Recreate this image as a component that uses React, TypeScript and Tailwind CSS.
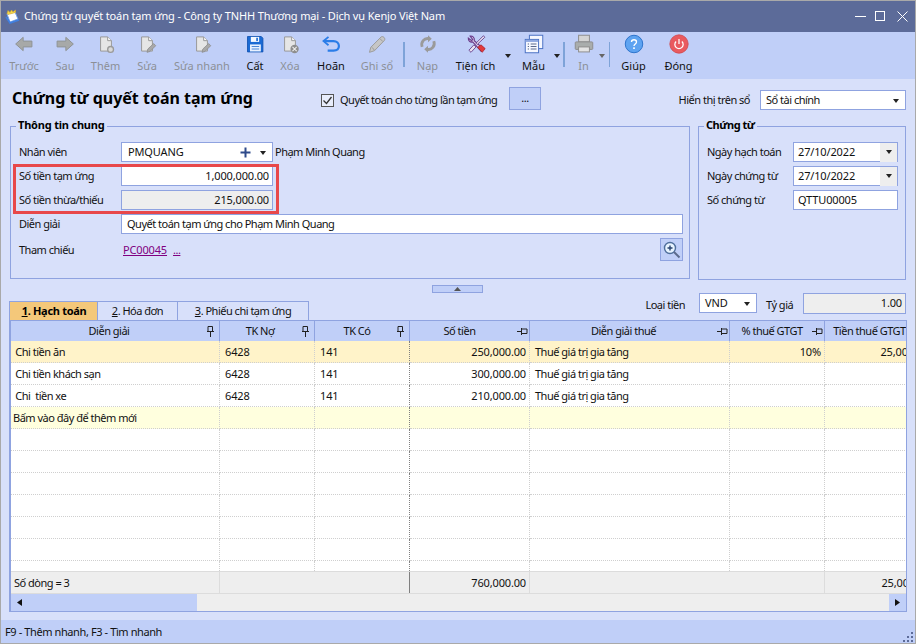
import React from "react";

const F = "font-['Noto_Sans','Liberation_Sans',sans-serif]";
const NUM = "tracking-[-0.15px]";

function DocBase({ children }: { children?: React.ReactNode }) {
  return (
    <svg width="20" height="20" viewBox="0 0 24 24" className="block">
      <path d="M5.5 3.5H14L18.5 8V20.5H5.5Z" fill="#e6e6e6" stroke="#9a9a9a" strokeWidth="1.2" />
      <path d="M14 3.5V8H18.5" fill="#fafafa" stroke="#9a9a9a" strokeWidth="1.2" />
      {children}
    </svg>
  );
}

const s = { width: 20, height: 20, viewBox: "0 0 24 24", className: "block" };

const Icons: Record<string, React.ReactNode> = {
  back: (
    <svg {...s}>
      <path d="M2 12L11 4V8.5H21.5V15.5H11V20Z" fill="#a7a9a8" stroke="#8f9496" strokeWidth="1.2" />
    </svg>
  ),
  next: (
    <svg {...s}>
      <path d="M22 12L13 4V8.5H2.5V15.5H13V20Z" fill="#a7a9a8" stroke="#8f9496" strokeWidth="1.2" />
    </svg>
  ),
  add: (
    <DocBase>
      <circle cx="17.5" cy="18.5" r="3.5" fill="#d9d9d9" stroke="#9a9a9a" strokeWidth="1.6" />
    </DocBase>
  ),
  edit: (
    <DocBase>
      <path d="M12 22L13 18L20 11.5L22.5 14L15.5 21Z" fill="#a9a9a9" stroke="#8a8a8a" strokeWidth=".9" />
    </DocBase>
  ),
  save: (
    <svg {...s}>
      <path d="M3 3H19.5L21.5 5V21.5H3Z" fill="#1a6ad4" stroke="#0f4fb0" />
      <rect x="7" y="3.5" width="10" height="6" fill="#f4f8ff" />
      <rect x="13.5" y="4.5" width="2" height="4" fill="#1a6ad4" />
      <rect x="6" y="12.5" width="13" height="8.5" fill="#e8f1ff" />
      <path d="M8 15H17M8 18H17" stroke="#4a86d8" strokeWidth="1.2" />
    </svg>
  ),
  del: (
    <DocBase>
      <circle cx="17.5" cy="18" r="5" fill="#8e8e8e" />
      <path d="M15 15.5L20 20.5M20 15.5L15 20.5" stroke="#eee" strokeWidth="1.3" />
    </DocBase>
  ),
  undo: (
    <svg {...s}>
      <path d="M9 3.5L3 8.5L9 13.5" fill="none" stroke="#2a7de8" strokeWidth="2.2" />
      <path d="M4.5 8.5H15C19 8.5 21.5 11 21.5 14.5C21.5 18 19 20 15 20H8" fill="none" stroke="#2a7de8" strokeWidth="2.6" />
    </svg>
  ),
  post: (
    <svg {...s}>
      <path d="M3 22L4.5 16L17 3.5C19 2 22.5 5 21 7.5L9 20Z" fill="#c6c6c6" stroke="#9c9c9c" strokeWidth="1.2" />
      <path d="M6 16L9 19.5M15.5 5.5L19 9" stroke="#9c9c9c" strokeWidth="1.2" />
    </svg>
  ),
  reload: (
    <svg {...s}>
      <path d="M5 15.5C3 9.5 7.5 4.5 13 5.5M19 8.5C21 14.5 16.5 19.5 11 18.5" fill="none" stroke="#9a9a9a" strokeWidth="3.4" />
      <path d="M12 1.5L16.5 5.7L12 10ZM12 14L7.5 18.3L12 22.5Z" fill="#9a9a9a" />
    </svg>
  ),
  tools: (
    <svg {...s}>
      <path d="M5 2.5L8 6.5L6.8 8L2.8 5C2.5 8 5 10.5 8 9.5L18 20.5L21 18L10 8C10.5 4.5 8 2 5 2.5Z" fill="#e0d4ee" stroke="#6a3d8c" strokeWidth="1.4" />
      <path d="M21 2L12 11L13.5 12.5L22.5 4ZM9.5 13L3.5 19.5L6 22L12 15.5Z" fill="#e8e0f0" stroke="#5f3583" strokeWidth="1" />
      <path d="M14 16L18 13L23 17.5L19.5 22Z" fill="#e23a3a" stroke="#a91f2a" strokeWidth=".9" />
    </svg>
  ),
  tmpl: (
    <svg {...s}>
      <rect x="6.5" y="1.5" width="16" height="16" fill="#f6f8ff" stroke="#4c73c4" strokeWidth="1.2" />
      <rect x="1.5" y="6.5" width="16" height="16" fill="#f6f8ff" stroke="#4c73c4" strokeWidth="1.2" />
      <rect x="2" y="7" width="15" height="2.5" fill="#8fa8e0" />
      <path d="M4.5 12H6M8 12H15M4.5 15H6M8 15H15M4.5 18H6M8 18H15" stroke="#5b6a8c" strokeWidth="1.2" />
    </svg>
  ),
  print: (
    <svg {...s}>
      <rect x="5.5" y="1.5" width="13" height="8" fill="#d4d4d4" stroke="#8e8e8e" strokeWidth="1.2" />
      <rect x="1.5" y="9.5" width="21" height="9" rx="1" fill="#a9adac" stroke="#8e8e8e" strokeWidth="1.2" />
      <rect x="5.5" y="15.5" width="13" height="6" fill="#e4e4e4" stroke="#8e8e8e" strokeWidth="1.2" />
    </svg>
  ),
  help: (
    <svg {...s}>
      <circle cx="12" cy="12" r="10.5" fill="#5ea3f1" stroke="#2e74cc" strokeWidth="1.2" />
      <path d="M9 9.5C9 6 15 6 15 9.5C15 12 12 12 12 14.5" fill="none" stroke="#fff" strokeWidth="1.6" />
      <rect x="11" y="16" width="2" height="2" fill="#fff" />
    </svg>
  ),
  close: (
    <svg {...s}>
      <circle cx="12" cy="12" r="11" fill="#e95a5f" stroke="#cf4b50" />
      <path d="M8.5 9A5 5 0 1 0 15.5 9M12 6V12" fill="none" stroke="#fff" strokeWidth="1.5" />
    </svg>
  ),
};

function Tool({ w, icon, label, on }: { w: string; icon: string; label: string; on?: boolean }) {
  return (
    <div className={`flex flex-col items-center shrink-0 ${w}`}>
      <div className="h-[24px] mt-[2px]">{Icons[icon]}</div>
      <div className={`leading-[16px] whitespace-nowrap ${on ? "text-[#111]" : "text-[#8c8f96]"}`}>{label}</div>
    </div>
  );
}

function Sep() {
  return <div className="w-[1.5px] h-[25px] bg-[#7ea3d8] mt-[10px] shrink-0" />;
}

function Drop({ color = "#222" }: { color?: string }) {
  return (
    <svg width="6" height="4" viewBox="0 0 6 4" className="shrink-0 block">
      <path d="M0 0H6L3 4Z" fill={color} />
    </svg>
  );
}

function Pin({ h }: { h?: boolean }) {
  return h ? (
    <svg width="11" height="9" viewBox="0 0 11 9" className="absolute right-[1px] top-[6px]">
      <path d="M0 4.5H4M4.5 1V8M4.5 2H10V6.5H4.5" fill="none" stroke="#222" />
    </svg>
  ) : (
    <svg width="9" height="11" viewBox="0 0 9 11" className="absolute right-[4px] top-[5px]">
      <path d="M1 5.5H8M2 0.5H6.5V5.5M2 0.5V5.5M4.5 6V11" fill="none" stroke="#222" />
    </svg>
  );
}

const inp = "h-[20px] border border-[#8fa3e0] flex items-center text-[#111] pt-[1px]";
const lbl = "pl-[8px] pt-[1px] whitespace-nowrap";
const cols = "grid grid-cols-[209px_95px_95px_120px_200px_95px_108px] w-[922px]";

function Cell({ i, right, children }: { i: number; right?: boolean; children?: React.ReactNode }) {
  const b = i === 2 ? "border-r border-r-[#808080]" : "border-r border-dotted border-r-[#cfcfcf]";
  const pad = right ? "justify-end pr-[3px]" : i === 0 ? "pl-[2px]" : "pl-[5px]";
  const t = right || i === 1 || i === 2 ? NUM : "";
  return (
    <div className={`h-[22px] pt-[1px] flex items-center border-b border-dotted border-b-[#cfcfcf] overflow-hidden whitespace-nowrap ${b} ${pad} ${t}`}>
      {children}
    </div>
  );
}

function Row({ v, bg }: { v: (string | undefined)[]; bg?: string }) {
  return (
    <div className={`${cols} ${bg ?? "bg-white"} shrink-0`}>
      {[0, 1, 2, 3, 4, 5, 6].map((i) => (
        <Cell key={i} i={i} right={i === 3 || i === 5 || i === 6}>
          {v[i]}
        </Cell>
      ))}
    </div>
  );
}

function Head({ pr, label, h, pin = true }: { pr: string; label: string; h?: boolean; pin?: boolean }) {
  return (
    <div className={`relative h-[20px] pt-[1px] flex items-center justify-center border-r border-[#8fa3e0] whitespace-nowrap ${pr}`}>
      {label}
      {pin && <Pin h={h} />}
    </div>
  );
}

export default function App() {
  return (
    <div className={`${F} w-[916px] h-[644px] flex flex-col border border-[#a9a9a9] bg-[#d8e0fa] text-[11px] tracking-[-0.5px] text-[#111] overflow-hidden`}>
      {/* title bar */}
      <div className="h-[31px] shrink-0 bg-[#5c6b99] flex items-center text-white">
        <svg width="16" height="15" viewBox="0 0 16 15" className="ml-[3px] mr-[4px]">
          <path d="M3 5L11 3L14 10L6 13Z" fill="#fdfdfd" stroke="#6fa0ee" />
          <path d="M3 4.5L4 1.5L6 3.5L7.5 1L9 3L11.5 1L11.5 3.5L4 5.5Z" fill="#f6d94a" stroke="#d8a828" strokeWidth=".6" />
          <path d="M2 8L6 14L15 11" fill="none" stroke="#3f7fe0" strokeWidth="1.5" />
        </svg>
        <span className="tracking-[-0.15px]">Chứng từ quyết toán tạm ứng - Công ty TNHH Thương mại - Dịch vụ Kenjo Việt Nam</span>
        <svg width="56" height="14" viewBox="0 0 56 14" className="ml-auto mr-[4px] mb-[2px]">
          <path d="M0 7.5H11" stroke="#fff" />
          <rect x="20.5" y="2.5" width="9" height="9" fill="none" stroke="#fff" />
          <path d="M42.5 2.5L52.5 12.5M52.5 2.5L42.5 12.5" stroke="#fff" />
        </svg>
      </div>

      {/* toolbar */}
      <div className="h-[47px] shrink-0 bg-[#c0cff8] flex pl-[3px] tracking-normal">
        <Tool w="w-[40px]" icon="back" label="Trước" />
        <Tool w="w-[42px]" icon="next" label="Sau" />
        <Tool w="w-[39px]" icon="add" label="Thêm" />
        <Tool w="w-[44px]" icon="edit" label="Sửa" />
        <Tool w="w-[66px]" icon="edit" label="Sửa nhanh" />
        <Tool w="w-[40px]" icon="save" label="Cất" on />
        <Tool w="w-[30px]" icon="del" label="Xóa" />
        <Tool w="w-[52px]" icon="undo" label="Hoãn" on />
        <Tool w="w-[40px]" icon="post" label="Ghi sổ" />
        <div className="w-[6px]" />
        <Sep />
        <Tool w="w-[46px]" icon="reload" label="Nạp" />
        <Tool w="w-[50px]" icon="tools" label="Tiện ích" on />
        <div className="w-[10px] pl-[4px] mt-[22px] shrink-0"><Drop /></div>
        <Tool w="w-[46px]" icon="tmpl" label="Mẫu" on />
        <div className="w-[6px] mt-[22px] -ml-[3px] shrink-0"><Drop /></div>
        <div className="w-[3.5px]" />
        <Sep />
        <Tool w="w-[38px]" icon="print" label="In" />
        <div className="w-[6px] mt-[22px] -ml-[4px] shrink-0"><Drop color="#666" /></div>
        <div className="w-[4px]" />
        <Sep />
        <Tool w="w-[47px]" icon="help" label="Giúp" on />
        <Tool w="w-[43px]" icon="close" label="Đóng" on />
      </div>

      {/* body */}
      <div className="flex-1 min-h-0 flex flex-col relative">
        {/* title row */}
        <div className="h-[39px] shrink-0 flex items-start pl-[11px] pr-[9px]">
          <div className="w-[309px] mt-[7px] text-[16px] tracking-normal leading-[24px] font-bold text-black whitespace-nowrap">Chứng từ quyết toán tạm ứng</div>
          <div className="mt-[15px] w-[13px] h-[13px] border border-[#555] bg-[#e8edfb] flex items-center justify-center">
            <svg width="11" height="11" viewBox="0 0 11 11">
              <path d="M1.5 5.5L4.5 8.5L9.5 2" fill="none" stroke="#333" strokeWidth="1.3" />
            </svg>
          </div>
          <div className="ml-[6px] w-[169px] mt-[13px] leading-[16px] whitespace-nowrap">Quyết toán cho từng lần tạm ứng</div>
          <div className="mt-[8px] w-[32px] h-[23px] bg-[#c0cff8] border border-[#8fa3e0] flex items-center justify-center">...</div>
          <div className="ml-auto mt-[13px] leading-[16px] mr-[10px]">Hiển thị trên sổ</div>
          <div className={`${inp} mt-[11px] w-[146px] bg-white pl-[5px] pr-[6px] justify-between`}>
            Sổ tài chính
            <Drop />
          </div>
        </div>

        {/* groups */}
        <div className="mt-[8px] ml-[9px] flex items-start gap-[8px] shrink-0">
          <div className="relative w-[680px] h-[153px] border border-[#8fa3e0] pt-[15px]">
            <div className="absolute -top-[10px] left-[5px] px-[2px] bg-[#d8e0fa] font-bold leading-[16px] tracking-[-0.2px] text-black">Thông tin chung</div>
            <div className="flex flex-col gap-[4px]">
              <div className="flex items-center">
                <div className={`w-[110px] ${lbl}`}>Nhân viên</div>
                <div className={`${inp} w-[152px] bg-white pl-[6px] pr-[6px] ${NUM}`}>
                  PMQUANG
                  <svg width="11" height="11" viewBox="0 0 11 11" className="ml-auto mr-[9px]">
                    <path d="M5.5 0.5V10.5M0.5 5.5H10.5" stroke="#2e4a8a" strokeWidth="2" />
                  </svg>
                  <Drop />
                </div>
                <div className="ml-[2px] pt-[1px]">Phạm Minh Quang</div>
              </div>
              <div className="flex items-center">
                <div className={`w-[110px] ${lbl}`}>Số tiền tạm ứng</div>
                <div className={`${inp} w-[152px] bg-white justify-end pr-[3px] ${NUM}`}>1,000,000.00</div>
              </div>
              <div className="flex items-center">
                <div className={`w-[110px] ${lbl}`}>Số tiền thừa/thiếu</div>
                <div className={`${inp} w-[152px] bg-[#eeeeee] justify-end pr-[3px] ${NUM}`}>215,000.00</div>
              </div>
              <div className="flex items-center">
                <div className={`w-[110px] ${lbl}`}>Diễn giải</div>
                <div className={`${inp} w-[562px] bg-white pl-[5px]`}>Quyết toán tạm ứng cho Phạm Minh Quang</div>
              </div>
              <div className="flex items-center h-[23px] pr-[6px]">
                <div className={`w-[112px] ${lbl}`}>Tham chiếu</div>
                <span className={`text-[#800080] underline pt-[1px] ${NUM}`}>PC00045</span>
                <span className="text-[#800080] underline ml-[6px] pt-[1px]">...</span>
                <div className="ml-auto w-[23px] h-[23px] bg-[#c0cff8] border border-[#8fa3e0] flex items-center justify-center">
                  <svg width="18" height="18" viewBox="0 0 18 18">
                    <circle cx="7" cy="7" r="5.5" fill="#e8f4ff" stroke="#4f6f9c" strokeWidth="1.4" />
                    <path d="M7 4.5V9.5M4.5 7H9.5" stroke="#26406e" strokeWidth="1.4" />
                    <path d="M11 11L16.5 16.5" stroke="#5c6b8c" strokeWidth="2" />
                  </svg>
                </div>
              </div>
            </div>
            {/* red highlight */}
            <div className="absolute left-[2px] top-[37px] w-[266px] h-[50px] border-[3px] border-[#e8484a]" />
          </div>

          <div className="relative w-[208px] h-[154px] border border-[#8fa3e0] pt-[15px]">
            <div className="absolute -top-[10px] left-[5px] px-[2px] bg-[#d8e0fa] font-bold leading-[16px] text-black">Chứng từ</div>
            <div className="flex flex-col gap-[4px]">
              {["Ngày hạch toán", "Ngày chứng từ"].map((l) => (
                <div key={l} className="flex items-center">
                  <div className={`w-[94px] ${lbl}`}>{l}</div>
                  <div className={`${inp} w-[105px] bg-white pl-[4px] ${NUM}`}>
                    27/10/2022
                    <div className="ml-auto w-[17px] h-[19px] -mt-[1px] bg-[#eeeeee] flex items-center justify-center"><Drop /></div>
                  </div>
                </div>
              ))}
              <div className="flex items-center">
                <div className={`w-[94px] ${lbl}`}>Số chứng từ</div>
                <div className={`${inp} w-[105px] bg-white pl-[4px] ${NUM}`}>QTTU00005</div>
              </div>
            </div>
          </div>
        </div>

        {/* splitter */}
        <div className="h-[5px] shrink-0" />
        <div className="h-[8px] shrink-0 flex justify-center pr-[1px]">
          <div className="w-[51px] h-[8px] bg-[#c0cff8] border border-[#8fa3e0] flex items-center justify-center">
            <svg width="7" height="4" viewBox="0 0 7 4"><path d="M0 4H7L3.5 0Z" fill="#555" /></svg>
          </div>
        </div>

        {/* tabs + currency */}
        <div className="h-[27px] shrink-0 flex pl-[8px] pr-[9px] justify-between">
          <div className="self-end flex h-[19px] border border-b-0 border-[#8fa3e0] bg-[#d8e0fa]">
            <div className="w-[88px] pt-[1px] pl-[1px] bg-[#f4c87a] flex items-center justify-center font-bold tracking-[-0.3px] text-black border-r border-[#8fa3e0]"><span><span className="underline">1</span>. Hạch toán</span></div>
            <div className="w-[80px] pt-[1px] flex items-center justify-center border-r border-[#8fa3e0]"><span><span className="underline">2</span>. Hóa đơn</span></div>
            <div className="w-[130px] pt-[1px] flex items-center justify-center"><span><span className="underline">3</span>. Phiếu chi tạm ứng</span></div>
          </div>
          <div className="flex items-start">
            <div className="mt-[4px] leading-[16px] mr-[14px]">Loại tiền</div>
            <div className={`${inp} w-[58px] bg-white pl-[5px] pr-[6px] justify-between ${NUM}`}>VND<Drop /></div>
            <div className="mt-[4px] leading-[16px] ml-[9px] w-[37px] whitespace-nowrap">Tỷ giá</div>
            <div className={`h-[21px] w-[103px] border border-[#8fa3e0] bg-[#eeeeee] flex items-center justify-end pr-[3px] ${NUM}`}>1.00</div>
          </div>
        </div>

        {/* grid */}
        <div className="ml-[8px] w-[898px] h-[292px] shrink-0 border border-l-2 border-t-0 border-[#8fa3e0] flex flex-col overflow-hidden bg-white">
          <div className={`${cols} bg-[#c0cff8] border-t border-[#8fa3e0] shrink-0`}>
            <Head pr="pr-[12px]" label="Diễn giải" />
            <Head pr="pr-[14px]" label="TK Nợ" />
            <Head pr="pr-[10px]" label="TK Có" />
            <Head pr="pr-[20px]" label="Số tiền" h />
            <Head pr="pr-[12px]" label="Diễn giải thuế" h />
            <Head pr="pr-[10px]" label="% thuế GTGT" h />
            <Head pr="pr-[18px]" label="Tiền thuế GTGT" pin={false} />
          </div>
          <div className="flex-1 min-h-0 flex flex-col overflow-hidden">
            <Row bg="bg-[#fff3c9]" v={["\u00a0Chi tiền ăn", "6428", "141", "250,000.00", "Thuế giá trị gia tăng", "10%", "25,000.00"]} />
            <Row v={["\u00a0Chi tiền khách sạn", "6428", "141", "300,000.00", "Thuế giá trị gia tăng"]} />
            <Row v={["\u00a0Chi\u00a0\u00a0tiền xe", "6428", "141", "210,000.00", "Thuế giá trị gia tăng"]} />
            <Row bg="bg-[#ffffde]" v={["Bấm vào đây để thêm mới"]} />
            {[0, 1, 2, 3, 4, 5, 6].map((i) => (
              <Row key={i} v={[]} />
            ))}
          </div>
          <div className={`${cols} h-[23px] bg-[#eeeeee] border-t border-b border-[#dcdcdc] shrink-0 items-center`}>
            <div className="h-full pt-[1px] flex items-center pl-[3px] border-r border-[#dcdcdc]">Số dòng = 3</div>
            <div />
            <div className="h-full border-r border-[#808080]" />
            <div className={`h-full pt-[1px] flex items-center justify-end pr-[3px] border-r border-[#dcdcdc] ${NUM}`}>760,000.00</div>
            <div />
            <div className="h-full border-r border-[#dcdcdc]" />
            <div className={`h-full pt-[1px] flex items-center justify-end pr-[3px] ${NUM}`}>25,000.00</div>
          </div>
          <div className="h-[17px] shrink-0 flex bg-[#eeeeee]">
            <div className="w-[186px] bg-[#c0cff8] flex items-center pl-[6px]">
              <svg width="5" height="7" viewBox="0 0 5 7"><path d="M5 0V7L0 3.5Z" fill="#111" /></svg>
            </div>
            <div className="ml-auto w-[17px] bg-[#c0cff8] flex items-center justify-center">
              <svg width="5" height="7" viewBox="0 0 5 7"><path d="M0 0V7L5 3.5Z" fill="#111" /></svg>
            </div>
          </div>
        </div>

        <div className="flex-1" />
        {/* status */}
        <div className="h-[23px] pt-[1px] shrink-0 bg-[#c0cff8] flex items-center pl-[4px] relative tracking-[-0.4px]">
          F9 - Thêm nhanh, F3 - Tìm nhanh
          <svg width="11" height="11" viewBox="0 0 11 11" className="absolute right-[1px] bottom-[1px]">
            <path d="M8 1h2v2H8zM4 5h2v2H4zM8 5h2v2H8zM0 9h2v2H0zM4 9h2v2H4zM8 9h2v2H8z" fill="#5c6b99" />
          </svg>
        </div>
      </div>
    </div>
  );
}
